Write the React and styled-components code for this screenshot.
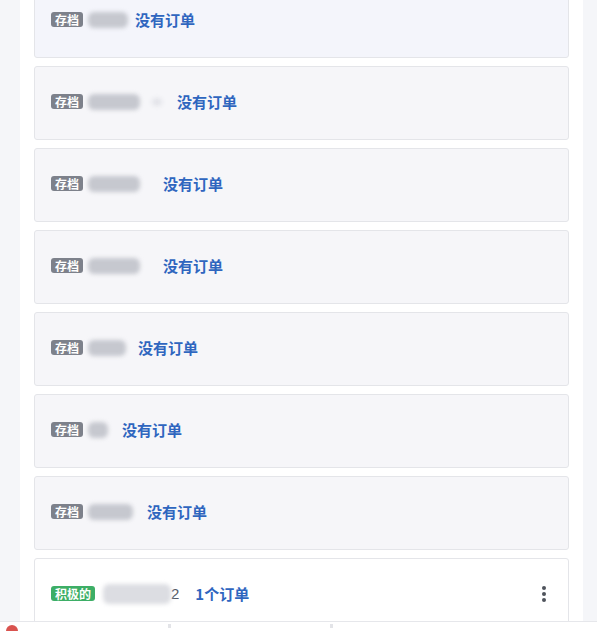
import React from "react";
import styled, { createGlobalStyle } from "styled-components";

const Global = createGlobalStyle`
  html, body { margin: 0; padding: 0; background: #f5f6f9; }
  body { font-family: "Noto Sans CJK SC", "Noto Sans", sans-serif; }
`;

const Page = styled.div`
  width: 597px;
  height: 631px;
  display: flex;
  flex-direction: column;
  overflow: hidden;
`;

const Body = styled.div`
  flex: 1;
  display: flex;
  overflow: hidden;
`;

const Side = styled.div`
  width: ${(p) => p.$w}px;
  background: #f5f6f9;
  flex-shrink: 0;
`;

const Main = styled.div`
  width: 563px;
  background: #ffffff;
  padding: 0 14px;
  box-sizing: border-box;
  overflow: hidden;
`;

const List = styled.div`
  margin-top: -16px;
  display: flex;
  flex-direction: column;
  gap: 8px;
`;

const Card = styled.div`
  height: 74px;
  box-sizing: border-box;
  border: 1px solid #e4e5e9;
  border-radius: 3px;
  background: ${(p) => p.$bg};
  display: flex;
  align-items: center;
  padding: 0 16px 3px;
  flex-shrink: 0;
`;

const Tag = styled.span`
  display: inline-flex;
  align-items: center;
  justify-content: center;
  height: 15px;
  padding: 0 4px;
  border-radius: 3px;
  background: ${(p) => p.$bg};
  color: #fff;
  font-size: 12px;
  font-weight: 700;
  line-height: 1;
  margin-right: 5px;
`;

const Blur = styled.span`
  display: inline-block;
  width: ${(p) => p.$w}px;
  height: ${(p) => p.$h || 16}px;
  background: ${(p) => p.$c || "#c6c8cf"};
  border-radius: 6px;
  filter: blur(2px);
  margin-left: ${(p) => p.$ml || 0}px;
`;

const Gap = styled.span`
  display: inline-block;
  width: ${(p) => p.$w}px;
`;

const Num = styled.span`
  font-family: "Liberation Sans", sans-serif;
  font-size: 15px;
  color: #555a66;
`;

const Orders = styled.span`
  color: #2f66bf;
  font-size: 15px;
  font-weight: 600;
`;

const Menu = styled.div`
  margin-left: auto;
  margin-right: 6px;
  display: flex;
  flex-direction: column;
  gap: 2px;
  span {
    width: 4px;
    height: 4px;
    border-radius: 50%;
    background: #4f535c;
  }
`;

const Footer = styled.div`
  height: 9px;
  flex-shrink: 0;
  background: #fff;
  border-top: 1px solid #e6e7eb;
  position: relative;
  overflow: hidden;
`;

const RedDot = styled.span`
  position: absolute;
  left: 6px;
  top: 3px;
  width: 12px;
  height: 12px;
  border-radius: 50%;
  background: #d9534f;
`;

const Mark = styled.span`
  position: absolute;
  left: ${(p) => p.$x}px;
  top: 2px;
  width: 3px;
  height: 4px;
  background: #e3e4e8;
`;

const archived = [
  { bg: "#f4f5fb", blur: 40, extra: null, gap: 7 },
  { bg: "#f6f6f9", blur: 52, extra: 10, gap: 15 },
  { bg: "#f6f6f9", blur: 52, extra: null, gap: 23 },
  { bg: "#f6f6f9", blur: 52, extra: null, gap: 23 },
  { bg: "#f6f6f9", blur: 38, extra: null, gap: 12 },
  { bg: "#f6f6f9", blur: 20, extra: null, gap: 14 },
  { bg: "#f6f6f9", blur: 45, extra: null, gap: 14 },
];

export default function App() {
  return (
    <>
      <Global />
      <Page>
        <Body>
          <Side $w={20} />
          <Main>
            <List>
              {archived.map((c, i) => (
                <Card key={i} $bg={c.bg}>
                  <Tag $bg="#7d818b">存档</Tag>
                  <Blur $w={c.blur} />
                  {c.extra && <Blur $w={c.extra} $h={8} $c="#e3e4e9" $ml={12} />}
                  <Gap $w={c.gap} />
                  <Orders>没有订单</Orders>
                </Card>
              ))}
              <Card $bg="#ffffff">
                <Tag $bg="#3dae66">积极的</Tag>
                <Blur $w={68} $h={20} $c="#dcdde2" $ml={3} />
                <Num>2</Num>
                <Gap $w={16} />
                <Orders>1个订单</Orders>
                <Menu>
                  <span />
                  <span />
                  <span />
                </Menu>
              </Card>
            </List>
          </Main>
          <Side $w={14} />
        </Body>
        <Footer>
          <RedDot />
          <Mark $x={168} />
          <Mark $x={330} />
        </Footer>
      </Page>
    </>
  );
}
